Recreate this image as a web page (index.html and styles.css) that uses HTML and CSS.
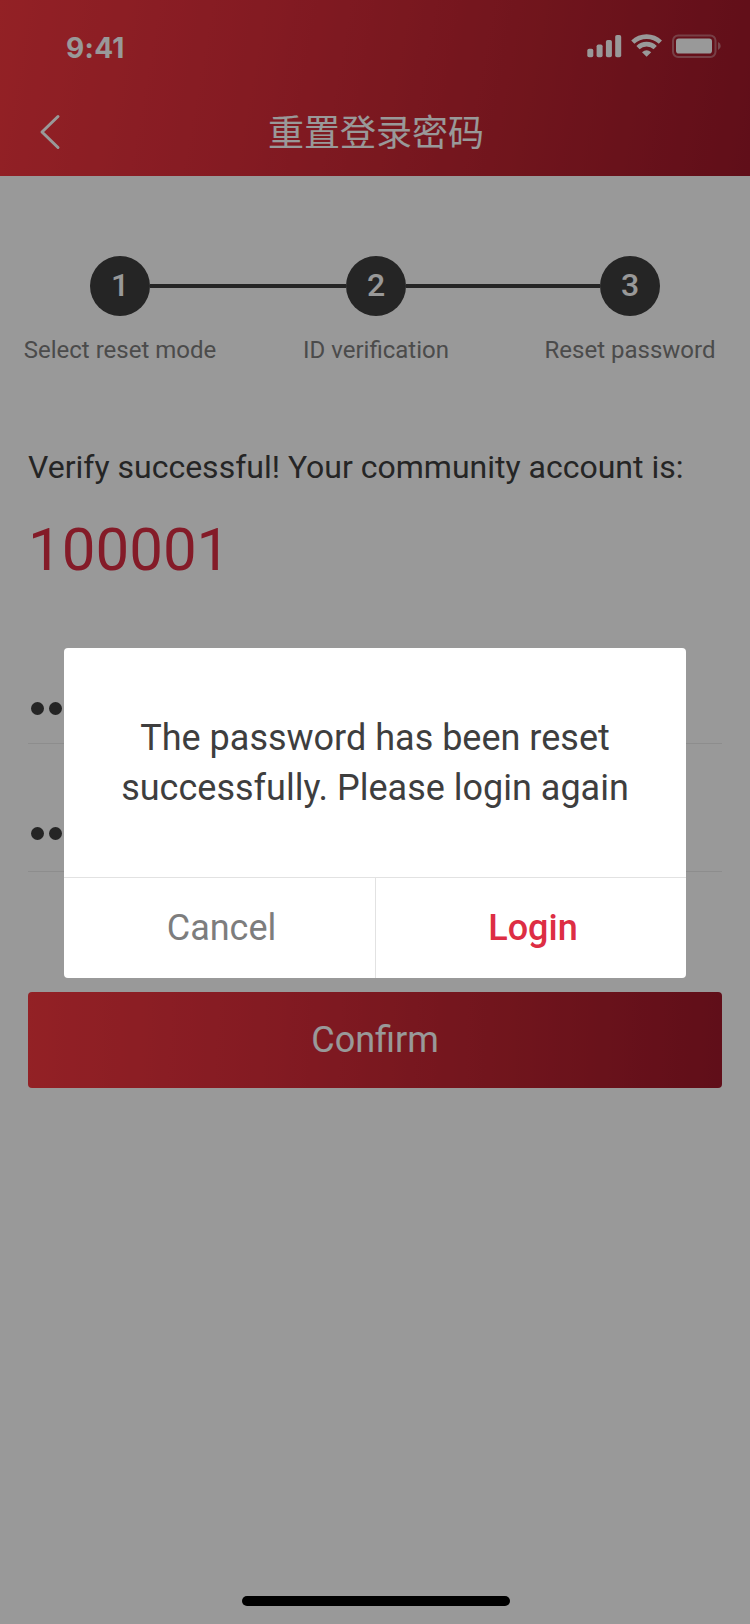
FILE: index.html
```html
<!DOCTYPE html>
<html lang="zh">
<head>
<meta charset="utf-8">
<title>重置登录密码</title>
<link rel="stylesheet" href="styles.css">
</head>
<body>
<div class="screen">
  <header class="header">
    <div class="status">
      <span class="time">9:41</span>
      <svg class="status-icons" viewBox="0 0 136 26" width="136" height="26" fill="#fff">
        <rect x="0.3" y="15.7" width="6" height="8.5" rx="1.8"/>
        <rect x="9.6" y="11.4" width="6" height="12.8" rx="1.8"/>
        <rect x="18.9" y="6.9" width="6" height="17.3" rx="1.8"/>
        <rect x="28.2" y="2" width="6" height="22.2" rx="1.8"/>
        <g fill="none" stroke="#fff" stroke-width="4.6">
          <path d="M45.8 9.1A20 20 0 0 1 73.4 9.1"/>
          <path d="M51 14.6A12.4 12.4 0 0 1 68.2 14.6"/>
        </g>
        <path d="M59.6 23.7L55 19.300Q59.6 15.300 64.200 19.300Z"/>
        <rect x="86" y="2.5" width="42.500" height="21.500" rx="5.2" fill="none" stroke="#fff" stroke-opacity=".35" stroke-width="2"/>
        <rect x="89" y="5.600" width="36" height="15" rx="2.8"/>
        <path d="M131 9a4.300 4.300 0 0 1 0 8Z" fill-opacity=".4"/>
      </svg>
    </div>
    <div class="nav">
      <svg class="back" viewBox="0 0 24 38" width="24" height="38"><path d="M20 3.500L4 19L20 34.500" fill="none" stroke="#fff" stroke-width="3" stroke-linecap="round" stroke-linejoin="round"/></svg>
      <h1 class="title">重置登录密码</h1>
    </div>
  </header>

  <main class="content">
    <div class="steps">
      <div class="step"><span class="dot">1</span><span class="label">Select reset mode</span></div>
      <div class="line first-line"></div>
      <div class="step"><span class="dot">2</span><span class="label">ID verification</span></div>
      <div class="line"></div>
      <div class="step"><span class="dot">3</span><span class="label">Reset password</span></div>
    </div>
    <p class="message">Verify successful! Your community account is:</p>
    <p class="account">100001</p>
    <div class="field first"><i></i><i></i><i></i><i></i><i></i><i></i></div>
    <div class="field second"><i></i><i></i><i></i><i></i><i></i><i></i></div>
    <button class="confirm">Confirm</button>
  </main>
  <div class="home"></div>
</div>

<div class="overlay">
  <div class="dialog">
    <p class="dialog-text">The password has been reset<br>successfully. Please login again</p>
    <div class="actions">
      <button class="action cancel">Cancel</button>
      <button class="action login">Login</button>
    </div>
  </div>
</div>
</body>
</html>
```
FILE: styles.css
```css
* { box-sizing: border-box; }
body, p, h1 { margin: 0; }
body { font-family: Roboto, "Noto Sans CJK SC", sans-serif; background: #fff; }
button { font: inherit; border: 0; padding: 0; background: none; }

.screen {
  display: flex;
  flex-direction: column;
  width: 750px;
  height: 1624px;
  overflow: hidden;
}

.header {
  height: 176px;
  background: linear-gradient(100deg, #f5373f 0%, #dc2d3a 34%, #bb2330 70%, #a0182a 100%);
}
.status {
  display: flex;
  justify-content: space-between;
  height: 88px;
  padding: 33px 27px 0 66px;
}
.time {
  padding-top: 1px;
  font: 700 28px/28px Inter, sans-serif;
  letter-spacing: .3px;
  color: #fff;
}
.nav {
  display: grid;
  grid-template-columns: 72px 1fr 72px;
  align-items: center;
  height: 88px;
}
.back { margin-left: 38px; }
.title {
  padding: 0 0 4px 2px;
  font: 400 36px/50px "Noto Sans CJK SC", sans-serif;
  text-align: center;
  color: #fff;
}

.content {
  display: flex;
  flex-direction: column;
  flex: 1;
  padding: 80px 28px 0;
}
.steps {
  display: flex;
  height: 112px;
  padding: 0 62px;
}
.step {
  display: flex;
  flex-direction: column;
  align-items: center;
  gap: 20px;
  width: 60px;
}
.dot {
  flex: none;
  width: 60px;
  height: 60px;
  border-radius: 50%;
  background: #3e3e3e;
  font-size: 32px;
  font-weight: 500;
  line-height: 58px;
  text-align: center;
  color: #fff;
}
.label {
  font-size: 24px;
  line-height: 28px;
  white-space: nowrap;
  color: #7d7d7d;
}
.line {
  flex: 1;
  height: 4px;
  margin-top: 28px;
  background: #3e3e3e;
}
.first-line { flex: 0 0 196px; }
.message {
  margin-top: 80px;
  font-size: 32px;
  line-height: 38px;
  color: #3e3e3e;
}
.account {
  margin-top: 29px;
  font-size: 60px;
  line-height: 70px;
  color: #dd2e44;
}
.field {
  display: flex;
  gap: 5.2px;
  padding-left: 2.500px;
  border-bottom: 1px solid #ebebeb;
}
.field i {
  width: 13.4px;
  height: 13.4px;
  border-radius: 50%;
  background: #3e3e3e;
}
.first { height: 42px; margin-top: 117px; }
.second { height: 45px; margin-top: 83px; }
.confirm {
  height: 96px;
  margin-top: 120px;
  border-radius: 4px;
  background: linear-gradient(92deg, #f5373f 0%, #dc2d3a 34%, #bb2330 70%, #a0182a 100%);
  font-size: 36px;
  color: #fff;
}
.home {
  width: 268px;
  height: 10px;
  margin: 0 0 18px 242px;
  border-radius: 5px;
  background: #000;
}

.overlay {
  position: fixed;
  inset: 0;
  padding: 648px 64px 0;
  background: rgba(0, 0, 0, .4);
}
.dialog {
  height: 330px;
  padding-top: 65px;
  border-radius: 4px;
  background: #fff;
}
.dialog-text {
  height: 164px;
  font-size: 36px;
  line-height: 50px;
  text-align: center;
  color: #3e3e3e;
}
.actions {
  display: grid;
  grid-template-columns: 1fr 1fr;
  height: 101px;
  border-top: 1px solid #e2e2e2;
}
.action {
  padding-left: 4px;
  font-size: 36px;
  line-height: 100px;
}
.cancel { color: #7d7d7d; }
.login {
  border-left: 1px solid #e2e2e2;
  font-weight: 500;
  color: #dd2e44;
}
```
